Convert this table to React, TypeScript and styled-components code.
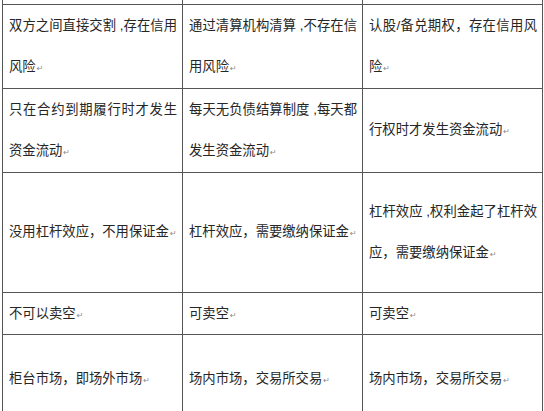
import React from "react";
import styled, { createGlobalStyle } from "styled-components";

const Global = createGlobalStyle`
  html, body { margin: 0; padding: 0; background: #ffffff; }
  body { width: 544px; height: 411px; overflow: hidden; }
`;

const Sheet = styled.div`
  padding-left: 2px;
`;

const Table = styled.table`
  border-collapse: collapse;
  table-layout: fixed;
  width: 540px;
  font-family: "Liberation Sans", "Noto Sans CJK SC", sans-serif;
  font-size: 13.33px;
  color: #262626;
`;

const Row = styled.tr<{ $h: number }>`
  height: ${(p) => p.$h}px;
`;

const Cell = styled.td<{ $open?: boolean }>`
  border: 1px solid #555555;
  border-top: ${(p) => (p.$open ? "none" : "1px solid #555555")};
  padding: 0 5px 0 6px;
  line-height: 41.5px;
  vertical-align: middle;
  text-align: justify;
  word-break: break-all;
`;

const Mark = styled.span`
  display: inline-block;
  font-family: "DejaVu Sans", sans-serif;
  font-size: 8px;
  line-height: 8px;
  color: #8a8a8a;
  margin-left: 1px;
`;

const rows: { h: number; cells: string[] }[] = [
  {
    h: 83,
    cells: [
      "双方之间直接交割 ,存在信用风险",
      "通过清算机构清算 ,不存在信用风险",
      "认股/备兑期权，存在信用风险",
    ],
  },
  {
    h: 84,
    cells: [
      "只在合约到期履行时才发生资金流动",
      "每天无负债结算制度 ,每天都发生资金流动",
      "行权时才发生资金流动",
    ],
  },
  {
    h: 120,
    cells: [
      "没用杠杆效应，不用保证金",
      "杠杆效应，需要缴纳保证金",
      "杠杆效应 ,权利金起了杠杆效应，需要缴纳保证金",
    ],
  },
  { h: 42, cells: ["不可以卖空", "可卖空", "可卖空"] },
  {
    h: 88,
    cells: ["柜台市场，即场外市场", "场内市场，交易所交易", "场内市场，交易所交易"],
  },
];

export default function App() {
  return (
    <>
      <Global />
      <Sheet>
        <Table>
          <colgroup>
            <col style={{ width: 180 }} />
            <col style={{ width: 180 }} />
            <col style={{ width: 180 }} />
          </colgroup>
          <tbody>
            <Row $h={4}>
              <Cell $open />
              <Cell $open />
              <Cell $open />
            </Row>
            {rows.map((r, i) => (
              <Row key={i} $h={r.h}>
                {r.cells.map((c, j) => (
                  <Cell key={j}>
                    {c}
                    <Mark>↵</Mark>
                  </Cell>
                ))}
              </Row>
            ))}
          </tbody>
        </Table>
      </Sheet>
    </>
  );
}
